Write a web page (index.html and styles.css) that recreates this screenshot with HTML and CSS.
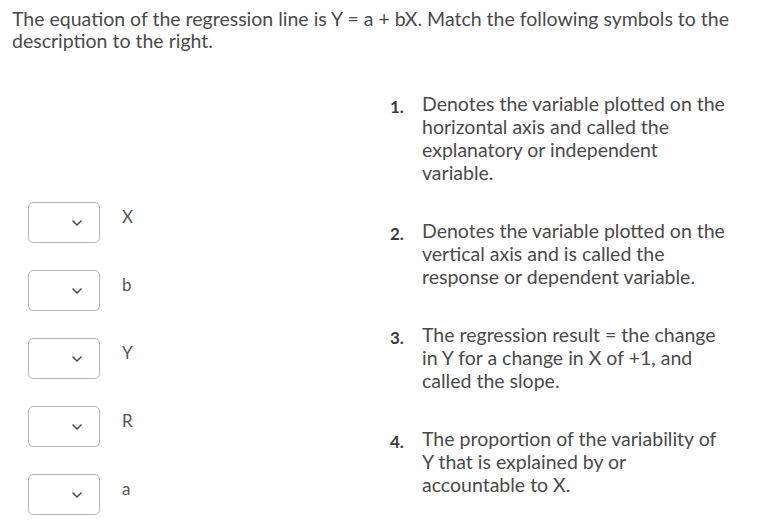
FILE: index.html
```html
<!DOCTYPE html>
<html>
<head>
<meta charset="utf-8">
<link rel="stylesheet" href="styles.css">
</head>
<body>
<p class="question">The equation of the regression line is Y = a + bX. Match the following symbols to the description to the right.</p>
<div class="match">
  <div class="pairs">
    <div class="pair"><div class="select"><svg class="chev" width="10" height="6" viewBox="0 0 10 6"><path d="M1 1 L5 5 L9 1" fill="none" stroke="#4d4d4d" stroke-width="1.6" stroke-linecap="round" stroke-linejoin="round"/></svg></div><span class="sym">X</span></div>
    <div class="pair"><div class="select"><svg class="chev" width="10" height="6" viewBox="0 0 10 6"><path d="M1 1 L5 5 L9 1" fill="none" stroke="#4d4d4d" stroke-width="1.6" stroke-linecap="round" stroke-linejoin="round"/></svg></div><span class="sym">b</span></div>
    <div class="pair"><div class="select"><svg class="chev" width="10" height="6" viewBox="0 0 10 6"><path d="M1 1 L5 5 L9 1" fill="none" stroke="#4d4d4d" stroke-width="1.6" stroke-linecap="round" stroke-linejoin="round"/></svg></div><span class="sym">Y</span></div>
    <div class="pair"><div class="select"><svg class="chev" width="10" height="6" viewBox="0 0 10 6"><path d="M1 1 L5 5 L9 1" fill="none" stroke="#4d4d4d" stroke-width="1.6" stroke-linecap="round" stroke-linejoin="round"/></svg></div><span class="sym">R</span></div>
    <div class="pair"><div class="select"><svg class="chev" width="10" height="6" viewBox="0 0 10 6"><path d="M1 1 L5 5 L9 1" fill="none" stroke="#4d4d4d" stroke-width="1.6" stroke-linecap="round" stroke-linejoin="round"/></svg></div><span class="sym">a</span></div>
  </div>
  <ol class="descs">
    <li class="desc"><span class="num">1.</span><span class="text">Denotes the variable plotted on the horizontal axis and called the explanatory or independent variable.</span></li>
    <li class="desc"><span class="num">2.</span><span class="text">Denotes the variable plotted on the vertical axis and is called the response or dependent variable.</span></li>
    <li class="desc"><span class="num">3.</span><span class="text">The regression result = the change in Y for a change in X of +1, and called the slope.</span></li>
    <li class="desc"><span class="num">4.</span><span class="text">The proportion of the variability of Y that is explained by or accountable to X.</span></li>
  </ol>
</div>
</body>
</html>
```
FILE: styles.css
```css
html, body {
  margin: 0;
  padding: 0;
  background: #ffffff;
}
body {
  font-family: Lato, "Open Sans", sans-serif;
  color: #4a4a4a;
  width: 771px;
}
.question {
  margin: 0;
  padding: 8px 30px 0 12px;
  font-size: 19.5px;
  line-height: 22px;
}
.match {
  display: flex;
  padding-left: 28px;
}
.pairs {
  display: flex;
  flex-direction: column;
  gap: 27px;
  padding-top: 150px;
  width: 362px;
}
.pair {
  display: flex;
  align-items: flex-start;
  gap: 22px;
}
.select {
  height: 39px;
  border: 1px solid #b3b3b3;
  border-radius: 5px;
  display: flex;
  align-items: center;
  justify-content: flex-end;
  padding-right: 17px;
  box-sizing: content-box;
  width: 53px;
}
.chev {
  display: block;
}
.sym {
  font-size: 17px;
  line-height: 20px;
  padding-top: 5px;
  color: #555;
}
.descs {
  list-style: none;
  margin: 0;
  padding: 40px 0 0 0;
  display: flex;
  flex-direction: column;
  gap: 35px;
}
.desc {
  display: flex;
  align-items: flex-start;
  font-size: 19.5px;
  line-height: 23px;
}
.num {
  width: 32px;
  flex: none;
  padding-top: 3px;
  font-weight: 700;
  color: #3a3a3a;
  font-size: 17px;
}
.text {
  width: 304px;
}
```
